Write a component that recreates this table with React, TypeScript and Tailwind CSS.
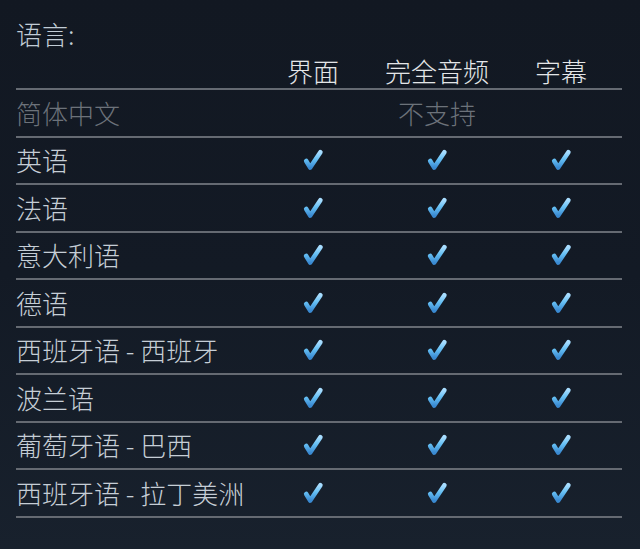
const rows: { name: string; supported: boolean }[] = [
  { name: "简体中文", supported: false },
  { name: "英语", supported: true },
  { name: "法语", supported: true },
  { name: "意大利语", supported: true },
  { name: "德语", supported: true },
  { name: "西班牙语 - 西班牙", supported: true },
  { name: "波兰语", supported: true },
  { name: "葡萄牙语 - 巴西", supported: true },
  { name: "西班牙语 - 拉丁美洲", supported: true },
];

function Check() {
  return (
    <svg width="24" height="24" viewBox="0 0 24 24">
      <defs>
        <linearGradient id="chk" x1="0" y1="0" x2="0" y2="1">
          <stop offset="0" stopColor="#a8ddff" />
          <stop offset="0.45" stopColor="#66c0f4" />
          <stop offset="1" stopColor="#3a8ad2" />
        </linearGradient>
      </defs>
      <path
        d="M5.2 13 L9.2 19.6 L19.4 4.2"
        fill="none"
        stroke="url(#chk)"
        strokeWidth="4.6"
        strokeLinecap="round"
        strokeLinejoin="round"
      />
    </svg>
  );
}

export default function App() {
  return (
    <div className="w-[640px] h-[549px] overflow-hidden bg-gradient-to-b from-[#121822] via-[#131a25] to-[#18212d] font-['Noto_Sans_CJK_SC','Noto_Sans',sans-serif] font-light text-[26px]">
      <div className="pl-4 pr-[18px] pt-[19px]">
        {/* 标题 */}
        <div className="h-[30px] leading-[30px] text-[#c1ccd6]">语言:</div>

        {/* 表头 */}
        <div className="grid grid-cols-[235px_124px_124px_124px] h-[41px] pt-1 items-center border-b-2 border-[#656a72] leading-[30px] text-[#e4e6e8]">
          <div />
          <div className="text-center">界面</div>
          <div className="text-center">完全音频</div>
          <div className="text-center">字幕</div>
        </div>

        {/* 语言列表 */}
        {rows.map((row) => (
          <div
            key={row.name}
            className="grid grid-cols-[235px_124px_124px_124px] h-[47.5px] items-center border-b-2 border-[#656a72] leading-[30px]"
          >
            {row.supported ? (
              <>
                <div className="text-[#c6ced6] whitespace-nowrap">{row.name}</div>
                <div className="flex justify-center"><Check /></div>
                <div className="flex justify-center"><Check /></div>
                <div className="flex justify-center"><Check /></div>
              </>
            ) : (
              <>
                <div className="text-[#6c727a]">{row.name}</div>
                <div className="col-span-3 text-center text-[#6c727a]">不支持</div>
              </>
            )}
          </div>
        ))}
      </div>
    </div>
  );
}
